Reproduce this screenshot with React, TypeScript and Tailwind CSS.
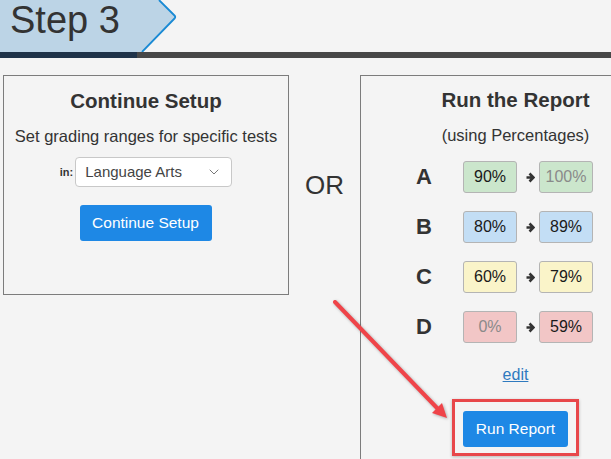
import { ChevronDown } from "lucide-react";

const font = { fontFamily: '"Liberation Sans", Arial, sans-serif' };

type Row = {
  letter: string;
  from: string;
  to: string;
  box: string;
  fromMuted?: boolean;
  toMuted?: boolean;
};

const rows: Row[] = [
  { letter: "A", from: "90%", to: "100%", box: "bg-[#cbe6cc]", toMuted: true },
  { letter: "B", from: "80%", to: "89%", box: "bg-[#c3def5]" },
  { letter: "C", from: "60%", to: "79%", box: "bg-[#faf4c9]" },
  { letter: "D", from: "0%", to: "59%", box: "bg-[#f2c6c6]", fromMuted: true },
];

function RangeBox({ value, box, muted }: { value: string; box: string; muted?: boolean }) {
  return (
    <div
      className={`w-[54px] h-[32px] flex items-center justify-center rounded-[3px] border border-[#b4b4b4] text-[16px] ${box} ${
        muted ? "text-[#8a8a8a]" : "text-[#1a1a1a]"
      }`}
    >
      {value}
    </div>
  );
}

function Header() {
  return (
    <div>
      <div className="relative h-[52px]">
        <svg className="absolute left-0 top-0" width="180" height="52" viewBox="0 0 180 52">
          <path d="M0 0 H159 L174.5 15.5 Q176 17 174.5 18.5 L142 52 H0 Z" fill="#bcd4e6" />
          <path
            d="M159 0 L174.5 15.5 Q176 17 174.5 18.5 L142 52"
            fill="none"
            stroke="#1a8ad4"
            strokeWidth="1.8"
          />
        </svg>
        <div className="relative pl-[10px] text-[38px] leading-[40px] text-[#333]">Step 3</div>
      </div>
      <div className="flex h-[6px]">
        <div className="w-[137px] bg-[#1f3349]" />
        <div className="flex-1 bg-[#474747]" />
      </div>
    </div>
  );
}

export default function App() {
  return (
    <div className="relative w-[611px] h-[459px] overflow-hidden bg-[#f4f4f4]" style={font}>
      <Header />

      <div className="flex items-start pt-[17px]">
        {/* left card */}
        <div className="shrink-0 ml-[3px] w-[286px] h-[220px] border border-[#7c7c7c] flex flex-col items-center">
          <h2 className="mt-[13px] text-[20.5px] leading-[24px] font-bold text-[#333]">Continue Setup</h2>
          <p className="mt-[13px] text-[16.5px] leading-[20px] text-[#333] whitespace-nowrap">
            Set grading ranges for specific tests
          </p>
          <div className="mt-[11px] flex items-start gap-[2px]">
            <span className="pt-[7px] text-[11px] font-bold text-[#333]">in:</span>
            <div className="w-[157px] h-[30px] bg-white border border-[#c8c8c8] rounded-[4px] flex items-center justify-between pl-[9px] pr-[9px] text-[15px] text-[#444]">
              <span>Language Arts</span>
              <ChevronDown size={16} strokeWidth={1.2} className="text-[#555]" />
            </div>
          </div>
          <button className="mt-[18px] w-[132px] h-[36px] rounded-[3px] bg-[#1e88e5] text-white text-[15.5px] pr-[1px]">
            Continue Setup
          </button>
        </div>

        {/* OR */}
        <div className="shrink-0 w-[71px] h-[220px] flex items-center justify-center text-[26px] text-[#333]">OR</div>

        {/* right card */}
        <div className="shrink-0 w-[310px] h-[400px] border-l border-t border-[#7c7c7c] flex flex-col items-center">
          <h2 className="mt-[12px] text-[20.5px] leading-[24px] font-bold text-[#333]">Run the Report</h2>
          <p className="mt-[13px] text-[16.5px] leading-[20px] text-[#333]">(using Percentages)</p>

          <div className="self-start ml-[55px] mt-[16px] flex flex-col gap-[18px]">
            {rows.map((r) => (
              <div key={r.letter} className="flex items-center">
                <div className="w-[47px] text-[22px] font-bold text-[#333] leading-none">{r.letter}</div>
                <RangeBox value={r.from} box={r.box} muted={r.fromMuted} />
                <svg className="ml-[9px] mr-[4px]" width="9" height="11" viewBox="0 0 9 11">
                  <path d="M0.5 5.5 H7 M3.5 1.5 L7.5 5.5 L3.5 9.5" fill="none" stroke="#333" strokeWidth="2.6" />
                </svg>
                <RangeBox value={r.to} box={r.box} muted={r.toMuted} />
              </div>
            ))}
          </div>

          <a href="#" className="mt-[20px] text-[16px] text-[#2f7abf] underline">
            edit
          </a>

          <div className="mt-[12px] border-[3px] border-[#e8474a] px-[8px] pt-[9px] pb-[6px] shadow-[0_1px_3px_rgba(0,0,0,0.25)]">
            <button className="w-[105px] h-[36px] rounded-[3px] bg-[#1e88e5] text-white text-[15.5px]">
              Run Report
            </button>
          </div>
        </div>
      </div>

      {/* callout arrow */}
      <svg className="absolute left-0 top-0 pointer-events-none" width="611" height="459">
        <g style={{ filter: "drop-shadow(1px 1px 1.5px rgba(0,0,0,0.3))" }}>
          <line x1="335" y1="302" x2="438" y2="409" stroke="#ef4449" strokeWidth="4" strokeLinecap="round" />
          <polygon points="447,418 432,413 442,403" fill="#ef4449" />
        </g>
      </svg>
    </div>
  );
}
